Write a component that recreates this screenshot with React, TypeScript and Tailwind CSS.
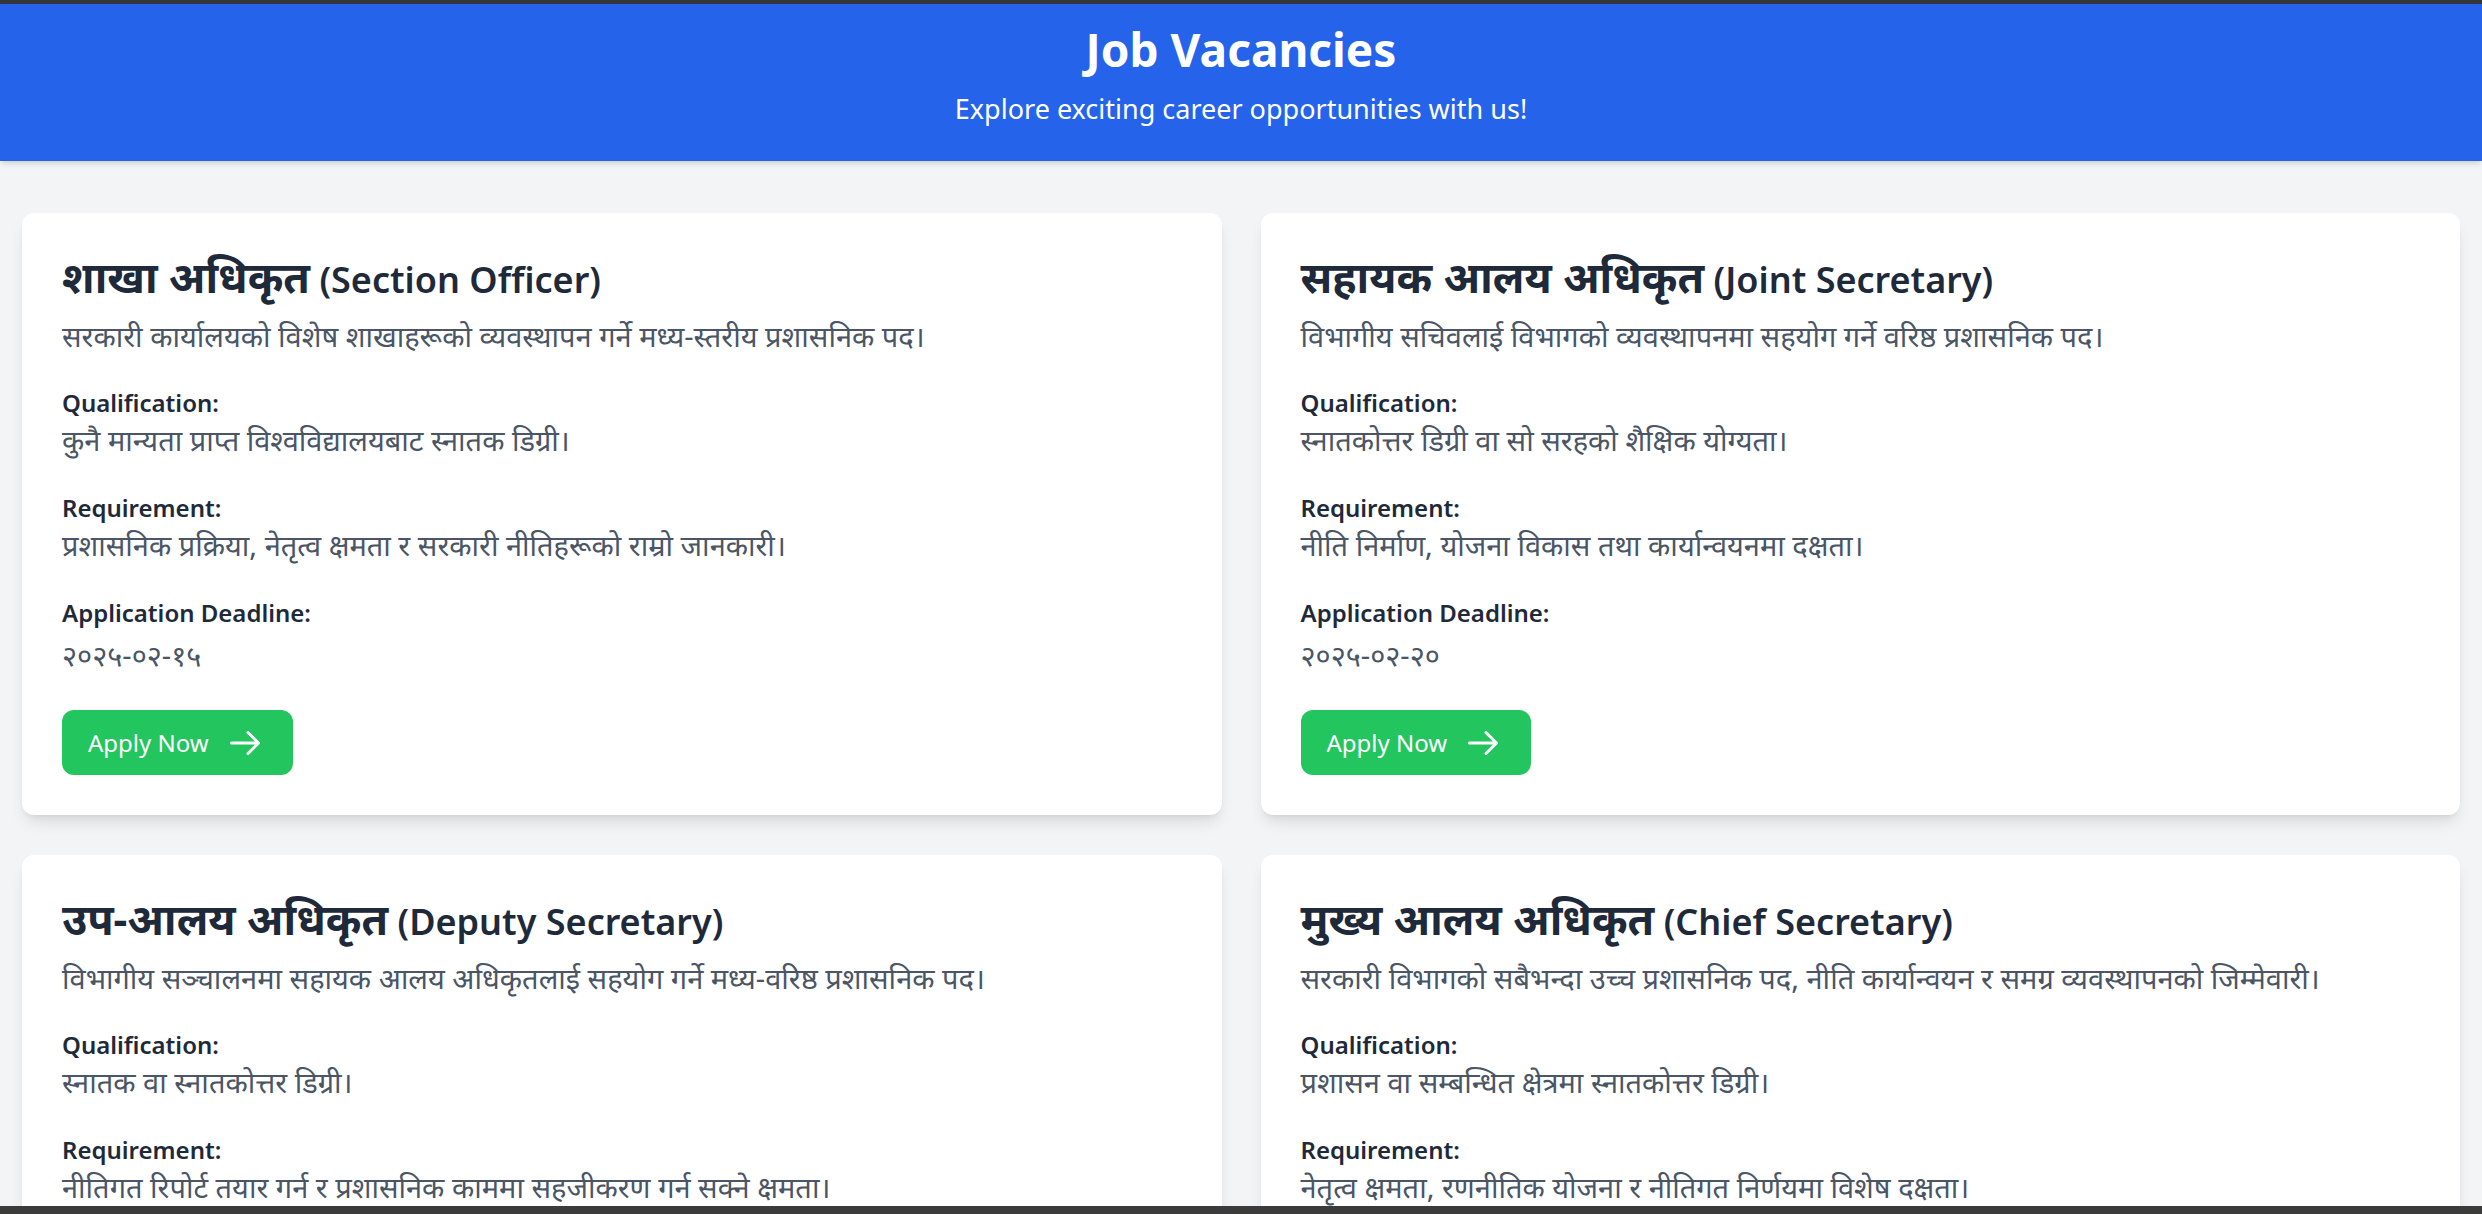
import React from "react"

type Job = {
  title: string
  english: string
  description: string
  qualification: string
  requirement: string
  deadline: string
}

const jobs: Job[] = [
  {
    title: "शाखा अधिकृत",
    english: "(Section Officer)",
    description: "सरकारी कार्यालयको विशेष शाखाहरूको व्यवस्थापन गर्ने मध्य-स्तरीय प्रशासनिक पद।",
    qualification: "कुनै मान्यता प्राप्त विश्वविद्यालयबाट स्नातक डिग्री।",
    requirement: "प्रशासनिक प्रक्रिया, नेतृत्व क्षमता र सरकारी नीतिहरूको राम्रो जानकारी।",
    deadline: "२०२५-०२-१५",
  },
  {
    title: "सहायक आलय अधिकृत",
    english: "(Joint Secretary)",
    description: "विभागीय सचिवलाई विभागको व्यवस्थापनमा सहयोग गर्ने वरिष्ठ प्रशासनिक पद।",
    qualification: "स्नातकोत्तर डिग्री वा सो सरहको शैक्षिक योग्यता।",
    requirement: "नीति निर्माण, योजना विकास तथा कार्यान्वयनमा दक्षता।",
    deadline: "२०२५-०२-२०",
  },
  {
    title: "उप-आलय अधिकृत",
    english: "(Deputy Secretary)",
    description: "विभागीय सञ्चालनमा सहायक आलय अधिकृतलाई सहयोग गर्ने मध्य-वरिष्ठ प्रशासनिक पद।",
    qualification: "स्नातक वा स्नातकोत्तर डिग्री।",
    requirement: "नीतिगत रिपोर्ट तयार गर्न र प्रशासनिक काममा सहजीकरण गर्न सक्ने क्षमता।",
    deadline: "२०२५-०२-२५",
  },
  {
    title: "मुख्य आलय अधिकृत",
    english: "(Chief Secretary)",
    description: "सरकारी विभागको सबैभन्दा उच्च प्रशासनिक पद, नीति कार्यान्वयन र समग्र व्यवस्थापनको जिम्मेवारी।",
    qualification: "प्रशासन वा सम्बन्धित क्षेत्रमा स्नातकोत्तर डिग्री।",
    requirement: "नेतृत्व क्षमता, रणनीतिक योजना र नीतिगत निर्णयमा विशेष दक्षता।",
    deadline: "२०२५-०३-०१",
  },
]

function ArrowIcon() {
  return (
    <svg viewBox="0 0 24 24" className="w-[36px] h-[36px]" fill="none" stroke="currentColor" strokeWidth={2} strokeLinecap="round" strokeLinejoin="round">
      <path d="M3 12h18M14 5l7 7-7 7" />
    </svg>
  )
}

function JobCard({ job }: { job: Job }) {
  return (
    <div className="bg-white rounded-xl shadow-lg p-[40px] flex flex-col">
      <h2 className="text-[36px] leading-[54px] font-semibold text-gray-800">
        <span className="text-[43px] leading-[36px] font-bold">{job.title}</span> {job.english}
      </h2>
      <p className="mt-[11px] text-[29px] leading-[36px] text-gray-600">{job.description}</p>

      {/* Qualification */}
      <div className="mt-[31px]">
        <p className="text-[24px] leading-[36px] font-semibold text-gray-800">Qualification:</p>
        <p className="mt-[1px] text-[29px] leading-[36px] text-gray-600">{job.qualification}</p>
      </div>

      {/* Requirement */}
      <div className="mt-[32px]">
        <p className="text-[24px] leading-[36px] font-semibold text-gray-800">Requirement:</p>
        <p className="mt-[1px] text-[29px] leading-[36px] text-gray-600">{job.requirement}</p>
      </div>

      {/* Deadline */}
      <div className="mt-[32px]">
        <p className="text-[24px] leading-[36px] font-semibold text-gray-800">Application Deadline:</p>
        <p className="mt-[6px] text-[29px] leading-[36px] text-gray-600">{job.deadline}</p>
      </div>

      <div className="mt-[37px]">
        <button className="inline-flex items-center h-[65px] pl-[26px] pr-[30px] gap-[18px] rounded-[12px] bg-[#22c55e] text-white text-[24px]">
          Apply Now
          <ArrowIcon />
        </button>
      </div>
    </div>
  )
}

export default function App() {
  return (
    <div
      className="min-h-screen bg-gray-100 border-t-4 border-[#35363a]"
      style={{ fontFamily: '"Noto Sans", "Noto Sans Devanagari", "Open Sans", sans-serif' }}
    >
      <header className="bg-[#2563eb] text-white text-center shadow-md pt-[18px] pb-[32px]">
        <h1 className="text-[46px] leading-[54px] font-bold">Job Vacancies</h1>
        <p className="mt-[13px] text-[27px] leading-[40px]">Explore exciting career opportunities with us!</p>
      </header>

      <main className="px-[22px] pt-[52px] pb-[40px] grid grid-cols-2 gap-x-[39px] gap-y-[40px]">
        {jobs.map((job) => (
          <JobCard key={job.english} job={job} />
        ))}
      </main>

      {/* bottom window bar */}
      <div className="fixed bottom-0 left-0 right-0 h-[8px] bg-[#3b3b3b]" />
    </div>
  )
}
